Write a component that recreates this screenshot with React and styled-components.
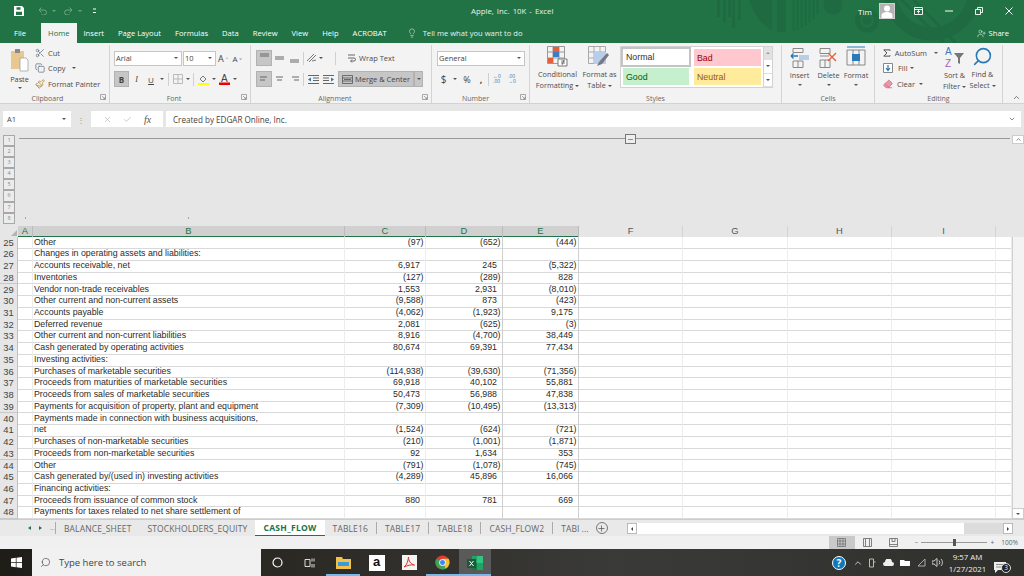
import React from 'react';
import styled, { createGlobalStyle } from 'styled-components';
import { Scissors, Copy, Paintbrush, Lightbulb, UserPlus, Search, Plus, ChevronUp, ChevronDown, X, Check, Minus, Eraser } from 'lucide-react';

const Global = createGlobalStyle`
  html, body { margin: 0; padding: 0; background: #e6e6e6; }
  body { font-family: "Open Sans", "Liberation Sans", Arial, sans-serif; overflow: hidden; }
  * { box-sizing: border-box; }
`;
const Page = styled.div`width:1024px;height:576px;display:flex;flex-direction:column;overflow:hidden;color:#444;`;
const Header = styled.header`position:relative;height:43px;background:#217346;color:#fff;overflow:hidden;flex:none;`;
const Deco = styled.svg`position:absolute;left:700px;top:0;width:300px;height:43px;`;
const TitleRow = styled.div`position:relative;height:22px;display:flex;align-items:center;padding-left:14px;`;
const Qat = styled.div`display:flex;align-items:center;gap:5px;width:425px;`;
const TitleText = styled.div`width:262px;font-size:7.8px;color:#e8f2ec;word-spacing:1px;padding-left:32px;`;
const Account = styled.div`display:flex;align-items:center;margin-left:157px;font-size:8px;gap:7px;`;
const Avatar = styled.div`width:16px;height:16px;background:#b4b4b4;border:1px solid #d0d0d0;position:relative;overflow:hidden;`;
const AvatarSvg = styled.svg`display:block;width:14px;height:14px;`;
const WinButtons = styled.div`display:flex;align-items:center;margin-left:19px;gap:22px;`;
const TabRow = styled.nav`position:relative;height:21px;display:flex;align-items:flex-end;padding-left:14px;font-size:7.6px;`;
const Tab = styled.div`
  height:20px;display:flex;align-items:center;
  margin-right:${p => p.$mr || 14}px;
  ${p => p.$active ? 'background:#f3f3f3;color:#217346;padding:0 7px;' : ''}
`;
const Tell = styled.div`display:flex;align-items:center;gap:6px;color:#e8f2ec;margin-left:6px;flex:1;height:20px;`;
const Share = styled.div`display:flex;align-items:center;gap:3px;height:20px;font-size:7.6px;margin-right:15px;`;

const Ribbon = styled.section`height:61px;flex:none;background:#f3f3f3;display:flex;border-bottom:1px solid #d2d2d2;padding-top:2px;position:relative;`;
const Group = styled.div`
  width:${p => p.$w}px;flex:none;display:flex;flex-direction:column;
  border-right:1px solid #d4d4d4;
  position:relative;
`;
const GroupBody = styled.div`flex:1;display:flex;padding-left:${p => p.$pl || 0}px;gap:${p => p.$gap || 0}px;min-height:0;`;
const GroupLabel = styled.div`height:13px;flex:none;font-size:7px;color:#666;text-align:center;line-height:17px;padding-right:${p => p.$pr || 0}px;`;
const Launcher = styled.svg`position:absolute;right:3px;bottom:3px;width:6px;height:6px;`;

const PasteCol = styled.div`width:27px;margin-left:6px;display:flex;flex-direction:column;align-items:center;font-size:7.3px;color:#444;line-height:10px;`;
const Stack = styled.div`display:flex;flex-direction:column;gap:${p => p.$gap ?? 3}px;padding-top:${p => p.$pt ?? 2}px;`;
const Small = styled.div`display:flex;align-items:center;gap:${p => p.$gap ?? 3}px;height:12.5px;font-size:7.5px;color:#4c4c4c;white-space:nowrap;`;
const Cols = styled.div`display:flex;flex-direction:column;gap:${p => p.$gap ?? 5}px;padding-top:${p => p.$pt ?? 5}px;`;
const Line = styled.div`display:flex;align-items:center;gap:${p => p.$gap ?? 0}px;height:16px;`;
const Field = styled.div`
  width:${p => p.$w}px;height:15px;background:#fff;border:1px solid #c6c6c6;
  display:flex;align-items:center;justify-content:space-between;padding:0 3px 0 1px;font-size:7.5px;color:#444;margin-right:${p => p.$mr || 0}px;
`;
const Caret = styled.span`display:inline-block;width:0;height:0;border-left:2px solid transparent;border-right:2px solid transparent;border-top:2px solid #555;margin:0 ${p => p.$m ?? 0}px;flex:none;vertical-align:middle;`;
const Btn = styled.div`
  width:${p => p.$w || 15}px;height:16px;display:flex;align-items:center;justify-content:center;font-size:${p => p.$fs || 8}px;color:#444;flex:none;gap:2px;
  background:${p => p.$on ? '#c6c6c6' : 'transparent'};
  ${p => p.$on ? 'border:1px solid #b2b2b2;' : ''}
`;
const Sep = styled.div`width:1px;height:13px;background:#d0d0d0;margin:0 ${p => p.$m ?? 2}px;flex:none;`;
const Big = styled.div`width:${p => p.$w}px;display:flex;flex-direction:column;align-items:center;font-size:7.3px;color:#4c4c4c;line-height:10.5px;text-align:center;flex:none;white-space:nowrap;`;
const BigIcon = styled.div`height:23px;display:flex;align-items:flex-end;justify-content:center;margin-bottom:2px;`;
const Gallery = styled.div`width:153px;height:42px;background:#fff;border:1px solid #d2d2d2;display:grid;grid-template-columns:71px 71px 9px;grid-template-rows:1fr 1fr;margin-top:1px;margin-left:1px;`;
const Style = styled.div`
  background:${p => p.$bg};color:${p => p.$c};font-size:8.8px;font-family:"Liberation Sans",sans-serif;display:flex;align-items:center;padding-left:3px;
  margin:${p => p.$m};
  ${p => p.$sel ? 'border:2px solid #c4c4c4;margin:0 1px 0 0;' : ''}
`;
const GalleryBar = styled.div`grid-row:1 / span 2;grid-column:3;border-left:1px solid #d2d2d2;display:flex;flex-direction:column;align-items:center;`;
const GalleryCell = styled.div`flex:1;width:100%;display:flex;align-items:center;justify-content:center;background:${p => p.$bg || 'transparent'};border-bottom:1px solid #e0e0e0;`;
const CollapseBtn = styled.div`position:absolute;right:3px;bottom:1px;color:#555;display:flex;`;

const Gap = styled.div`height:7px;flex:none;`;
const FormulaBar = styled.div`height:16px;flex:none;display:flex;padding:0 3px;`;
const NameBox = styled.div`width:68px;background:#fff;display:flex;align-items:center;justify-content:space-between;padding:0 5px 0 4px;font-size:7.5px;color:#444;`;
const Dots = styled.div`width:20px;display:flex;justify-content:center;align-items:center;color:#999;font-size:8px;`;
const FxBox = styled.div`width:72px;background:#fff;display:flex;align-items:center;justify-content:space-around;padding:0 6px;margin-right:3px;color:#bbb;`;
const Fx = styled.span`font-family:"Liberation Serif",serif;font-style:italic;font-size:10px;color:#555;`;
const Formula = styled.div`flex:1;background:#fff;display:flex;align-items:center;justify-content:space-between;padding:0 5px 0 7px;font-size:8.1px;color:#444;`;

const Outline = styled.div`height:99px;flex:none;display:flex;padding-top:8px;`;
const OutlineNums = styled.div`width:19px;padding-left:3px;display:flex;flex-direction:column;`;
const OutlineNum = styled.div`width:12px;height:11.1px;border:1px solid #a8a8a8;background:#ececec;font-size:5.5px;color:#888;text-align:center;line-height:9px;`;
const OutlineArea = styled.div`flex:1;position:relative;`;
const OutlineRule = styled.div`position:absolute;left:0;top:3px;right:14px;height:1px;background:#999;`;
const OutlineTick = styled.div`position:absolute;left:${p => p.$x}px;top:82px;width:1px;height:2px;background:#aaa;`;
const CollapseBox = styled.div`position:absolute;left:606px;top:-1px;width:11px;height:10px;border:1px solid #777;background:#eee;display:flex;align-items:center;justify-content:center;`;
const UpBtn = styled.div`position:absolute;right:0;top:0;width:12px;height:9px;background:#fff;border:1px solid #ccc;display:flex;align-items:center;justify-content:center;`;

const SheetGrid = styled.div`height:293px;flex:none;display:flex;flex-direction:column;position:relative;background:#fff;`;
const COLS = '18px 15px 312px 81px 77px 76px 104px 105px 104px 104px 16px 12px';
const HeadRow = styled.div`display:grid;grid-template-columns:${COLS};height:10.6px;flex:none;background:#e6e6e6;`;
const Corner = styled.div`display:flex;justify-content:flex-end;align-items:flex-end;padding:0 1px 1px 0;`;
const ColHead = styled.div`
  font-size:9.4px;line-height:10px;text-align:center;font-family:"Liberation Sans",sans-serif;
  color:${p => p.$on ? '#217346' : '#555'};
  background:${p => p.$on ? '#d0d0d0' : '#e6e6e6'};
  border-right:1px solid ${p => p.$on ? '#bbb' : '#d4d4d4'};
  ${p => p.$on ? 'box-shadow: inset 0 -1px 0 #217346;' : ''}
`;
const Row = styled.div`display:grid;grid-template-columns:${COLS};height:11.74px;flex:none;`;
const RowNum = styled.div`
  background:#e6e6e6;color:#444;font-size:9.4px;line-height:11.5px;text-align:center;font-family:"Liberation Sans",sans-serif;border-bottom:1px solid #c8c8c8;border-right:1px solid #c0c0c0;
`;
const Cell = styled.div`
  border-bottom:1px solid #d9d9d9;border-right:1px solid ${p => p.$strong ? '#cfcfcf' : '#ececec'};
  font-family:"Liberation Sans",sans-serif;font-size:8.8px;line-height:11.6px;color:#2b2b2b;white-space:nowrap;overflow:visible;
  text-align:${p => p.$num ? 'right' : 'left'};
  padding:${p => p.$num ? `0 ${p.$paren ? 1.5 : 5}px 0 0` : '0 0 0 1px'};
`;
const ScrollCol = styled.div`grid-column:12;background:#f3f3f3;border-left:1px solid #d0d0d0;`;
const VBar = styled.div`position:absolute;right:0;bottom:0;width:12px;height:11px;background:#fff;border:1px solid #ccc;display:flex;align-items:center;justify-content:center;`;

const TabsBar = styled.div`height:17px;flex:none;background:#e9e9e9;border-top:1px solid #ccc;display:flex;align-items:stretch;font-size:8.5px;letter-spacing:.12px;color:#666;`;
const Nav = styled.div`width:55px;display:flex;align-items:center;justify-content:flex-end;gap:8px;color:#217346;font-size:6px;flex:none;`;
const Tri = styled.span`display:inline-block;width:0;height:0;border-top:2.5px solid transparent;border-bottom:2.5px solid transparent;${p => p.$r ? 'border-left:3px solid #217346;' : 'border-right:3px solid #217346;'}`;
const Sheet = styled.div`
  flex:none;display:flex;align-items:center;padding:0 ${p => p.$pr ?? 8}px 0 8px;
  border-left:${p => p.$bar ? '1px solid #aaa' : 'none'};
  height:${p => p.$active ? '100%' : '12px'};
  align-self:${p => p.$active ? 'stretch' : 'center'};
  ${p => p.$active ? 'background:#fff;color:#217346;font-weight:bold;border-bottom:1px solid #217346;letter-spacing:.3px;' : ''}
`;
const AddSheet = styled.div`width:12px;height:12px;border-radius:50%;border:1px solid #777;display:flex;align-items:center;justify-content:center;align-self:center;margin-left:3px;color:#555;flex:none;`;
const HScroll = styled.div`flex:1;margin-left:19px;display:flex;align-items:center;padding-right:11px;height:100%;padding-top:1px;`;
const ScrollEnd = styled.div`width:10px;height:11px;background:#fff;border:1px solid #bbb;display:flex;align-items:center;justify-content:center;flex:none;`;
const Tri2 = styled.span`display:inline-block;width:0;height:0;border-top:2px solid transparent;border-bottom:2px solid transparent;${p => p.$r ? 'border-left:2.5px solid #444;' : 'border-right:2.5px solid #444;'}`;
const Thumb = styled.div`width:327px;height:11px;background:#fff;flex:none;`;
const Track = styled.div`flex:1;height:11px;background:#dcdcdc;`;

const StatusBar = styled.div`height:13px;flex:none;background:#f0f0f0;display:flex;align-items:center;justify-content:flex-end;font-size:6.6px;color:#666;padding-right:6px;`;
const ViewBtn = styled.div`width:26px;height:13px;display:flex;align-items:center;justify-content:center;background:${p => p.$on ? '#c9c9c9' : 'transparent'};margin-right:${p => p.$mr || 0}px;`;
const Slider = styled.div`width:66px;height:1px;background:#999;position:relative;margin:0 3px;`;
const Knob = styled.div`position:absolute;left:32px;top:-3px;width:3px;height:7px;background:#555;`;

const Taskbar = styled.footer`height:27px;flex:none;background:linear-gradient(90deg,#1f1d18 0,#2c2a25 30%,#3a3a38 60%,#2f2f2c 100%);display:flex;align-items:stretch;color:#eee;`;
const StartBtn = styled.div`width:32px;display:flex;align-items:center;justify-content:center;`;
const SearchBox = styled.div`width:229px;background:#f1f1f1;color:#444;display:flex;align-items:center;gap:8px;padding-left:8px;font-size:9.5px;`;
const TaskIcons = styled.div`display:flex;flex:1;`;
const TaskIcon = styled.div`
  width:${p => p.$w || 33}px;display:flex;align-items:center;justify-content:center;
  background:${p => p.$on ? '#5a5a5a' : 'transparent'};
  ${p => p.$lit ? 'box-shadow: inset 0 -2px 0 #76b9ed;' : ''}
`;
const Tray = styled.div`display:flex;align-items:center;gap:6.5px;padding-right:17px;`;
const Clock = styled.div`font-size:7.9px;line-height:12px;text-align:center;color:#eee;width:38px;margin-left:-1px;white-space:nowrap;`;
const Help = styled.div`width:14px;height:14px;border-radius:50%;background:#0f78b8;border:1px solid #fff;color:#fff;font-weight:bold;font-size:10px;line-height:12px;text-align:center;`;
const Note = styled.div`position:relative;width:13px;height:14px;margin-left:1px;`;
const NoteBadge = styled.div`position:absolute;right:-4px;bottom:-3px;width:10px;height:10px;border-radius:50%;background:#222;border:1px solid #ddd;color:#eee;font-size:6.5px;line-height:8px;text-align:center;`;
const AmazonBox = styled.div`width:16px;height:16px;background:#fff;color:#111;font-size:13px;font-weight:bold;line-height:13px;text-align:center;font-family:"Liberation Sans",sans-serif;`;

const Launch = () => <Launcher viewBox="0 0 6 6"><path d="M.5.5h5v5h-5zM2 2l3 3M3 5h2V3" fill="none" stroke="#888" strokeWidth=".7" /></Launcher>;

const Lines = ({ ys, c = '#666' }) => (
  <svg width="11" height="10" viewBox="0 0 11 10">{ys.map((l, i) => <path key={i} d={`M${l[0]} ${l[1]}H${l[2]}`} stroke={c} strokeWidth="1" />)}</svg>
);

const rows = [
  [25,'Other','(97)','(652)','(444)'],
  [26,'Changes in operating assets and liabilities:'],
  [27,'Accounts receivable, net','6,917','245','(5,322)'],
  [28,'Inventories','(127)','(289)','828'],
  [29,'Vendor non-trade receivables','1,553','2,931','(8,010)'],
  [30,'Other current and non-current assets','(9,588)','873','(423)'],
  [31,'Accounts payable','(4,062)','(1,923)','9,175'],
  [32,'Deferred revenue','2,081','(625)','(3)'],
  [33,'Other current and non-current liabilities','8,916','(4,700)','38,449'],
  [34,'Cash generated by operating activities','80,674','69,391','77,434'],
  [35,'Investing activities:'],
  [36,'Purchases of marketable securities','(114,938)','(39,630)','(71,356)'],
  [37,'Proceeds from maturities of marketable securities','69,918','40,102','55,881'],
  [38,'Proceeds from sales of marketable securities','50,473','56,988','47,838'],
  [39,'Payments for acquisition of property, plant and equipment','(7,309)','(10,495)','(13,313)'],
  [40,'Payments made in connection with business acquisitions,'],
  [41,'net','(1,524)','(624)','(721)'],
  [42,'Purchases of non-marketable securities','(210)','(1,001)','(1,871)'],
  [43,'Proceeds from non-marketable securities','92','1,634','353'],
  [44,'Other','(791)','(1,078)','(745)'],
  [45,'Cash generated by/(used in) investing activities','(4,289)','45,896','16,066'],
  [46,'Financing activities:'],
  [47,'Proceeds from issuance of common stock','880','781','669'],
  [48,'Payments for taxes related to net share settlement of'],
];

const Num = ({ v, strong }) => <Cell $num $paren={v && v.startsWith('(')} $strong={strong}>{v || ''}</Cell>;

export default function App() {
  return (
    <Page>
      <Global />
      <Header>
        <Deco viewBox="0 0 300 43">
          <g stroke="#1f6a41" fill="none">
            <path d="M18.500 0v17M24.500 0v22M29.500 0v17M33.500 0v28M39.500 0v20" strokeWidth="2.600" />
            <path d="M81.500 0v32" strokeWidth="9" />
            <path d="M93.500 0v31M97.500 0v30M101.500 0v28M105.500 0v26M109.500 0v23M113.500 0v20M117.500 0v14" strokeWidth="1.800" />
            <circle cx="167" cy="20.500" r="9.500" strokeWidth="5" />
            <circle cx="232" cy="-8" r="42" strokeWidth="13" />
            <path d="M196 -6L244 43M204 -10L256 43" strokeWidth="3" />
          </g>
          <path d="M49 0h23v30C62 26 54 14 49 0z" fill="#1f6a41" />
          <circle cx="133" cy="5" r="9.500" fill="#1f6a41" />
          <circle cx="167" cy="20.500" r="4.500" fill="#1f6a41" />
        </Deco>
        <TitleRow>
          <Qat>
            <svg width="10" height="10" viewBox="0 0 10 10"><path d="M0 0h8l2 2v8H0z" fill="#fff" /><path d="M2.500 1.300h4v2.400h-4zM2 5.800h6V9H2z" fill="#217346" /></svg>
            <svg width="9" height="8" viewBox="0 0 9 8" style={{ marginLeft: 9 }}><path d="M1 3h5a2.500 2.500 0 0 1 0 5H3M1 3l2.500-2.500M1 3l2.500 2.500" fill="none" stroke="#6aa585" /></svg>
            <Caret style={{ borderTopColor: '#6aa585' }} />
            <svg width="9" height="8" viewBox="0 0 9 8" style={{ marginLeft: 3 }}><path d="M8 3H3a2.500 2.500 0 0 0 0 5h3M8 3L5.500.5M8 3L5.500 5.500" fill="none" stroke="#6aa585" /></svg>
            <Caret style={{ borderTopColor: '#6aa585' }} />
            <svg width="4" height="6" viewBox="0 0 4 6" style={{ marginLeft: 6 }}><path d="M0 1h3M0 4.500h3" stroke="#fff" /></svg>
          </Qat>
          <TitleText>Apple, Inc. 10K  -  Excel</TitleText>
          <Account>
            Tim
            <Avatar><AvatarSvg viewBox="0 0 14 14"><circle cx="7" cy="4.500" r="3" fill="#fff" /><path d="M1.500 14v-3c0-2 3-3 5.500-3s5.500 1 5.500 3v3z" fill="#fff" /></AvatarSvg></Avatar>
          </Account>
          <WinButtons>
            <svg width="9" height="8" viewBox="0 0 9 8"><path d="M.5.5h8v7h-8zM.5 2.500h8M4.500 6.500V3.500M3 5l1.500-1.500L6 5" fill="none" stroke="#fff" strokeWidth=".9" /></svg>
            <svg width="8" height="2" viewBox="0 0 8 2"><path d="M0 1h8" stroke="#fff" /></svg>
            <svg width="8" height="8" viewBox="0 0 8 8"><path d="M.5 2.500h5v5h-5zM2.500 2.500v-2h5v5h-2" fill="none" stroke="#fff" strokeWidth=".9" /></svg>
            <svg width="8" height="8" viewBox="0 0 8 8"><path d="M.5.5l7 7M7.500.5l-7 7" stroke="#fff" /></svg>
          </WinButtons>
        </TitleRow>
        <TabRow>
          <Tab $mr={15}>File</Tab>
          <Tab $active $mr={7}>Home</Tab>
          <Tab $mr={14}>Insert</Tab>
          <Tab $mr={14}>Page Layout</Tab>
          <Tab $mr={14}>Formulas</Tab>
          <Tab $mr={14}>Data</Tab>
          <Tab $mr={14}>Review</Tab>
          <Tab $mr={14}>View</Tab>
          <Tab $mr={14}>Help</Tab>
          <Tab $mr={14}>ACROBAT</Tab>
          <Tell><Lightbulb size={10} strokeWidth={1.300} />Tell me what you want to do</Tell>
          <Share><UserPlus size={9} strokeWidth={1.300} />Share</Share>
        </TabRow>
      </Header>

      <Ribbon>
        <Group $w={110}>
          <GroupBody>
            <PasteCol>
              <svg width="19" height="24" viewBox="0 0 19 24" style={{ marginTop: 3 }}>
                <path d="M1 3h13v18H1z" fill="#e8c88e" /><path d="M5 1h5v4H5z" fill="#8a8a8a" />
                <path d="M10 10h6l2 2v11h-8z" fill="#fff" stroke="#999" strokeWidth=".7" />
              </svg>
              <span style={{ marginTop: 2 }}>Paste</span>
              <Caret style={{ marginTop: 3 }} />
            </PasteCol>
            <Stack style={{ marginLeft: 2 }}>
              <Small><Scissors size={10} color="#6f7f90" />Cut</Small>
              <Small><Copy size={10} color="#6f7f90" />Copy <Caret $m={3} /></Small>
              <Small><Paintbrush size={10} color="#b58a3c" />Format Painter</Small>
            </Stack>
          </GroupBody>
          <GroupLabel $pr={14}>Clipboard</GroupLabel>
          <Launch />
        </Group>

        <Group $w={141}>
          <GroupBody $pl={4}>
            <Cols>
              <Line>
                <Field $w={68} $mr={1}>Arial<Caret /></Field>
                <Field $w={33}>10<Caret /></Field>
                <Btn $w={14} $fs={9}>A<sup style={{ fontSize: 4 }}>^</sup></Btn>
                <Btn $w={14} $fs={8}>A<sup style={{ fontSize: 4 }}>v</sup></Btn>
              </Line>
              <Line>
                <Btn $on $w={15}><b>B</b></Btn>
                <Btn $w={15}><i style={{ fontFamily: '"Liberation Serif"' }}>I</i></Btn>
                <Btn $w={14}><u>U</u></Btn><Caret $m={2} />
                <Sep />
                <Btn $w={14}><svg width="10" height="10" viewBox="0 0 10 10"><path d="M.5.5h9v9h-9zM5 .5v9M.5 5h9" fill="none" stroke="#bbb" /></svg></Btn><Caret $m={1} />
                <Sep />
                <Btn $w={15}><svg width="11" height="12" viewBox="0 0 11 12"><path d="M2 6l3-3 3 3-3 3z" fill="none" stroke="#777" /><path d="M0 10h11v2H0z" fill="#ff0" /></svg></Btn><Caret $m={1} />
                <Btn $w={15}><svg width="11" height="12" viewBox="0 0 11 12"><text x="2" y="8.500" fontSize="10" fill="#444" fontFamily="Liberation Sans">A</text><path d="M0 9.500h11v2.500H0z" fill="#e00" /></svg></Btn><Caret $m={1} />
              </Line>
            </Cols>
          </GroupBody>
          <GroupLabel $pr={12}>Font</GroupLabel>
          <Launch />
        </Group>

        <Group $w={181}>
          <GroupBody $pl={5}>
            <Cols>
              <Line>
                <Btn $on $w={16}><Lines ys={[[1,1,10],[1,3,10]]} /></Btn>
                <Btn $w={15}><Lines ys={[[1,4,10],[1,6,10]]} /></Btn>
                <Btn $w={15}><Lines ys={[[1,7,10],[1,9,10]]} /></Btn>
                <Sep $m={1} />
                <Btn $w={13}><svg width="11" height="10" viewBox="0 0 11 10"><path d="M1 8L8 1M3 9l7-7M6 8l4-1" fill="none" stroke="#777" /></svg></Btn><Caret $m={1} />
                <Sep $m={11} />
                <Small style={{ gap: 3 }}><svg width="9" height="10" viewBox="0 0 9 10"><path d="M1 2h7M1 5h6a1.500 1.500 0 0 1 0 3H4M5 6.500L3.500 8 5 9.500" fill="none" stroke="#666" /></svg>Wrap Text</Small>
              </Line>
              <Line>
                <Btn $on $w={16}><Lines ys={[[1,3,8],[1,6,6]]} /></Btn>
                <Btn $w={15}><Lines ys={[[2,3,9],[3,6,8]]} /></Btn>
                <Btn $w={15}><Lines ys={[[3,3,10],[5,6,10]]} /></Btn>
                <Sep $m={1} />
                <Btn $w={16}><svg width="11" height="9" viewBox="0 0 11 9"><path d="M0 .5h11M5 3h6M5 5.500h6M0 8.500h11" stroke="#666" /><path d="M3 2.500L0 4.500l3 2z" fill="#2a7ab8" /></svg></Btn>
                <Btn $w={15}><svg width="11" height="9" viewBox="0 0 11 9"><path d="M0 .5h11M0 3h6M0 5.500h6M0 8.500h11" stroke="#666" /><path d="M8 2.500l3 2-3 2z" fill="#2a7ab8" /></svg></Btn>
                <div style={{ width: 2 }} />
                <Btn $on $w={76} $fs={7.5}><svg width="11" height="9" viewBox="0 0 11 9"><path d="M.5.5h10v8H.5zM.5 3h10M.5 6h10" fill="none" stroke="#555" strokeWidth=".8" /><path d="M2 4.500h7" stroke="#2a7ab8" /></svg>Merge &amp; Center</Btn>
                <Btn $on $w={9}><Caret /></Btn>
              </Line>
            </Cols>
          </GroupBody>
          <GroupLabel $pr={12}>Alignment</GroupLabel>
          <Launch />
        </Group>

        <Group $w={98}>
          <GroupBody $pl={5}>
            <Cols>
              <Line><Field $w={88}>General<Caret /></Field></Line>
              <Line>
                <Btn $w={13} $fs={10}>$</Btn><Caret $m={3} />
                <Btn $w={14} $fs={9}>%</Btn>
                <Btn $w={14} $fs={9}><b>,</b></Btn>
                <Sep $m={0} />
                <Btn $w={16} $fs={5}><span style={{ lineHeight: '5px', color: '#2a7ab8' }}>←0<br />.00</span></Btn>
                <Btn $w={14} $fs={5}><span style={{ lineHeight: '5px', color: '#2a7ab8' }}>.00<br />→0</span></Btn>
              </Line>
            </Cols>
          </GroupBody>
          <GroupLabel $pr={10}>Number</GroupLabel>
          <Launch />
        </Group>

        <Group $w={252}>
          <GroupBody $pl={5}>
            <Big $w={45}>
              <BigIcon><svg width="21" height="21" viewBox="0 0 21 21"><path d="M.5.5h17v17H.5zM6 .5v17M12 .5v17M.5 6h17M.5 12h17" fill="none" stroke="#999" /><path d="M6 1h6v5H6z" fill="#e2603a" /><path d="M6 6h6v5H6z" fill="#3a7dc0" /><path d="M1 12h5v5H1z" fill="#e2603a" /><path d="M11 13h9v7h-9z" fill="#fff" stroke="#777" /><path d="M14 15h4M14 17h4M17 14l-2 5" stroke="#444" strokeWidth=".7" /></svg></BigIcon>
              Conditional
              <span>Formatting <Caret /></span>
            </Big>
            <Big $w={39}>
              <BigIcon><svg width="23" height="21" viewBox="0 0 23 21"><path d="M.5.5h17v17H.5zM6 .5v17M12 .5v17M.5 6h17M.5 12h17" fill="none" stroke="#aaa" /><path d="M6 6h12v12H6z" fill="#b8cde8" /><path d="M21 9l-7 9-5 2 2-4 8-9z" fill="#778" /></svg></BigIcon>
              Format as
              <span>Table <Caret /></span>
            </Big>
            <Gallery>
              <Style $bg="#fff" $c="#333" $sel>Normal</Style>
              <Style $bg="#ffc7ce" $c="#9c0006" $m="2px 2px 1px 2px">Bad</Style>
              <Style $bg="#c6efce" $c="#006100" $m="1px 3px 2px 2px">Good</Style>
              <Style $bg="#ffeb9c" $c="#9c5700" $m="1px 2px 2px 2px">Neutral</Style>
              <GalleryBar>
                <GalleryCell $bg="#e2e2e2"><Caret style={{ transform: 'rotate(180deg)', opacity: .5 }} /></GalleryCell>
                <GalleryCell><Caret /></GalleryCell>
                <GalleryCell><Caret /></GalleryCell>
              </GalleryBar>
            </Gallery>
          </GroupBody>
          <GroupLabel>Styles</GroupLabel>
        </Group>

        <Group $w={93}>
          <GroupBody $pl={3}>
            <Big $w={29}>
              <BigIcon><svg width="20" height="20" viewBox="0 0 20 20"><path d="M3 .5h10v4H3zM3 13h10v6.500H3zM8 13v6.500" fill="none" stroke="#888" /><path d="M9 7h10v5H9z" fill="#b8cde8" /><path d="M1 8h7M1 8l2.500-2.500M1 8l2.500 2.500" fill="none" stroke="#2a7ab8" strokeWidth="1.400" /></svg></BigIcon>
              Insert
              <Caret style={{ marginTop: 3 }} />
            </Big>
            <Big $w={29}>
              <BigIcon><svg width="20" height="20" viewBox="0 0 20 20"><path d="M1 .5h10v5H1zM1 12h10v7.500H1zM6 12v7.500M1 8h9" fill="none" stroke="#888" /><path d="M9 5l8 8M17 5l-8 8" stroke="#e2603a" strokeWidth="1.400" /></svg></BigIcon>
              Delete
              <Caret style={{ marginTop: 3 }} />
            </Big>
            <Big $w={26}>
              <BigIcon><svg width="20" height="22" viewBox="0 0 20 22"><path d="M1 1h18" stroke="#2a7ab8" /><path d="M1 4h18v15H1zM7 4v15M13 4v15" fill="none" stroke="#888" /><path d="M6 8h8v7H6z" fill="#2a7ab8" /></svg></BigIcon>
              Format
              <Caret style={{ marginTop: 3 }} />
            </Big>
          </GroupBody>
          <GroupLabel>Cells</GroupLabel>
        </Group>

        <Group $w={128}>
          <GroupBody $pl={8}>
            <Stack style={{ width: 58 }}>
              <Small $gap={4}><svg width="10" height="10" viewBox="0 0 10 10"><path d="M9 2V1H1l4 4-4 4h8V8" fill="none" stroke="#444" strokeWidth="1.200" /></svg>AutoSum<Caret $m={3} /></Small>
              <Small $gap={2}><svg width="11" height="10" viewBox="0 0 11 10" style={{ marginRight: 2 }}><path d="M.5.5h9v9h-9z" fill="#fff" stroke="#888" /><path d="M5 2v5M3 5l2 2.500L7 5" fill="none" stroke="#2a7ab8" strokeWidth="1.200" /></svg>Fill<Caret /></Small>
              <Small $gap={4}><Eraser size={10} color="#d96a80" fill="#e898a8" />Clear<Caret /></Small>
            </Stack>
            <Big $w={27} style={{ marginLeft: 0 }}>
              <BigIcon><svg width="21" height="23" viewBox="0 0 21 23"><text x="1" y="10" fontSize="10" fill="#3a7dc0" fontFamily="Liberation Sans">A</text><text x="1" y="22" fontSize="10" fill="#a45fc0" fontFamily="Liberation Sans">Z</text><path d="M10 8h10l-4 5v6l-2-1v-5z" fill="#777" /></svg></BigIcon>
              Sort &amp;
              <span>Filter <Caret /></span>
            </Big>
            <Big $w={29}>
              <BigIcon><Search size={21} color="#2a7ab8" strokeWidth={1.800} style={{ transform: 'scaleX(-1)' }} /></BigIcon>
              Find &amp;
              <span>Select <Caret /></span>
            </Big>
          </GroupBody>
          <GroupLabel>Editing</GroupLabel>
        </Group>
        <CollapseBtn><ChevronUp size={9} /></CollapseBtn>
      </Ribbon>

      <Gap />
      <FormulaBar>
        <NameBox>A1<Caret /></NameBox>
        <Dots>⋮</Dots>
        <FxBox><X size={9} /><Check size={9} /><Fx>fx</Fx></FxBox>
        <Formula>Created by EDGAR Online, Inc.<ChevronDown size={8} color="#555" /></Formula>
      </FormulaBar>

      <Outline>
        <OutlineNums>
          {[1,2,3,4,5,6,7,8].map(n => <OutlineNum key={n}>{n}</OutlineNum>)}
        </OutlineNums>
        <OutlineArea>
          <OutlineRule />
          <OutlineTick $x={6} />
          <OutlineTick $x={169} />
          <CollapseBox><Minus size={7} color="#444" /></CollapseBox>
          <UpBtn><ChevronUp size={7} color="#444" /></UpBtn>
        </OutlineArea>
      </Outline>

      <SheetGrid>
        <HeadRow>
          <Corner><svg width="6" height="6" viewBox="0 0 6 6"><path d="M6 0v6H0z" fill="#b4b4b4" /></svg></Corner>
          {['A','B','C','D','E'].map(c => <ColHead key={c} $on>{c}</ColHead>)}
          {['F','G','H','I'].map(c => <ColHead key={c}>{c}</ColHead>)}
        </HeadRow>
        {rows.map(r => (
          <Row key={r[0]}>
            <RowNum>{r[0]}</RowNum>
            <Cell />
            <Cell>{r[1]}</Cell>
            <Num v={r[2]} />
            <Num v={r[3]} strong />
            <Num v={r[4]} strong />
            <Cell /><Cell /><Cell /><Cell /><Cell />
            <ScrollCol />
          </Row>
        ))}
        <VBar><Caret /></VBar>
      </SheetGrid>

      <TabsBar>
        <Nav><Tri /><Tri $r /><span style={{ color: '#666' }}>...</span></Nav>
        <Sheet $bar>BALANCE_SHEET</Sheet>
        <Sheet>STOCKHOLDERS_EQUITY</Sheet>
        <Sheet $active>CASH_FLOW</Sheet>
        <Sheet>TABLE16</Sheet>
        <Sheet $bar>TABLE17</Sheet>
        <Sheet $bar>TABLE18</Sheet>
        <Sheet $bar>CASH_FLOW2</Sheet>
        <Sheet $bar $pr={4}>TABI <span style={{ color: '#217346', marginLeft: 2 }}>...</span></Sheet>
        <AddSheet><Plus size={9} /></AddSheet>
        <HScroll>
          <ScrollEnd><Tri2 /></ScrollEnd>
          <Thumb />
          <Track />
          <ScrollEnd><Tri2 $r /></ScrollEnd>
        </HScroll>
      </TabsBar>

      <StatusBar>
        <ViewBtn $on><svg width="9" height="9" viewBox="0 0 9 9"><path d="M.5.5h8v8h-8zM3 .5v8M6 .5v8M.5 3h8M.5 6h8" fill="none" stroke="#666" strokeWidth=".7" /></svg></ViewBtn>
        <ViewBtn><svg width="9" height="9" viewBox="0 0 9 9"><path d="M.5.5h8v8h-8zM2.500.5v8M6.500.5v8" fill="none" stroke="#666" strokeWidth=".8" /></svg></ViewBtn>
        <ViewBtn $mr={8}><svg width="9" height="9" viewBox="0 0 9 9"><path d="M.5.5h8v8h-8zM3 .5v3h3v-3M.5 6.500h8" fill="none" stroke="#666" strokeWidth=".8" /></svg></ViewBtn>
        −<Slider><Knob /></Slider>+
        <span style={{ marginLeft: 7 }}>100%</span>
      </StatusBar>

      <Taskbar>
        <StartBtn><svg width="11" height="11" viewBox="0 0 11 11"><path d="M0 1.500l4.800-.7v4.300H0zM5.500.7L11 0v5.100H5.500zM0 5.800h4.800v4.400L0 9.500zM5.500 5.800H11V11l-5.500-.8z" fill="#fff" /></svg></StartBtn>
        <SearchBox><Search size={11} strokeWidth={1.400} style={{ transform: 'scaleX(-1)' }} />Type here to search</SearchBox>
        <TaskIcons>
          <TaskIcon $w={32}><svg width="11" height="11" viewBox="0 0 11 11"><circle cx="5.500" cy="5.500" r="4.500" fill="none" stroke="#fff" strokeWidth="1.200" /></svg></TaskIcon>
          <TaskIcon $w={33}><svg width="11" height="10" viewBox="0 0 11 10"><path d="M1 1.500h5v7H1zM8 .5v3M8 6v3.500M10 .5v3M10 6v3.500" fill="none" stroke="#ddd" /></svg></TaskIcon>
          <TaskIcon $lit $w={34}><svg width="15" height="13" viewBox="0 0 15 13"><path d="M0 1h6l1 2h8v10H0z" fill="#f3c14a" /><path d="M2 6h11v4H2z" fill="#3a9ad9" /></svg></TaskIcon>
          <TaskIcon $w={33}><AmazonBox>a</AmazonBox></TaskIcon>
          <TaskIcon $w={33}><svg width="15" height="15" viewBox="0 0 15 15"><path d="M0 0h15v15H0z" fill="#f4f4f4" /><path d="M2 12c3-2 4-6 4.500-10 0 4 2 7 6 8-4-.5-7 .500-10.500 2z" fill="none" stroke="#d32" /></svg></TaskIcon>
          <TaskIcon $lit $w={33}><svg width="15" height="15" viewBox="0 0 32 32"><circle cx="16" cy="16" r="15" fill="#e33b2e" /><path d="M16 16L29 24A15 15 0 0 1 9 29z" fill="#3aa757" /><path d="M16 16L9 29A15 15 0 0 1 3 8z" fill="#3aa757" /><path d="M16 8h13a15 15 0 0 1-7 21z" fill="#fbc02d" /><circle cx="16" cy="16" r="6.500" fill="#4285f4" stroke="#fff" strokeWidth="2" /></svg></TaskIcon>
          <TaskIcon $on $lit $w={32}><svg width="16" height="14" viewBox="0 0 16 14"><path d="M5 0h11v14H5z" fill="#21a366" /><path d="M10 0h6v7h-6z" fill="#33c481" /><path d="M5 7h5v7H5z" fill="#107c41" /><path d="M0 3h9v9H0z" fill="#185c37" /><path d="M2.500 5l4 5M6.500 5l-4 5" stroke="#fff" /></svg></TaskIcon>
        </TaskIcons>
        <Tray>
          <Help>?</Help>
          <ChevronUp size={10} color="#ddd" />
          <svg width="7" height="10" viewBox="0 0 7 10"><path d="M.5 1h4v8h-4zM4.500 4h2" fill="none" stroke="#bbb" /></svg>
          <svg width="11" height="7" viewBox="0 0 11 7"><path d="M2 7a2 2 0 0 1 0-4 3.500 3.500 0 0 1 7 0 2 2 0 0 1 0 4z" fill="#eee" /></svg>
          <svg width="10" height="7" viewBox="0 0 10 7"><path d="M0 1h4l1 1h5v5H0z" fill="#fff" /></svg>
          <svg width="9" height="9" viewBox="0 0 9 9"><path d="M1 8l7-7v7z" fill="none" stroke="#aaa" /></svg>
          <svg width="11" height="9" viewBox="0 0 11 9"><path d="M0 3h2l3-2.500v8L2 6H0zM7 2.500a3 3 0 0 1 0 4M9 1a5 5 0 0 1 0 7" fill="none" stroke="#ccc" /></svg>
          <Clock>9:57 AM<br />1/27/2021</Clock>
          <Note>
            <svg width="13" height="11" viewBox="0 0 13 11"><path d="M0 0h12v8H4L1 11V8H0z" fill="#eee" /><path d="M2 2.500h8M2 5h8" stroke="#888" /></svg>
            <NoteBadge>3</NoteBadge>
          </Note>
        </Tray>
      </Taskbar>
    </Page>
  );
}
